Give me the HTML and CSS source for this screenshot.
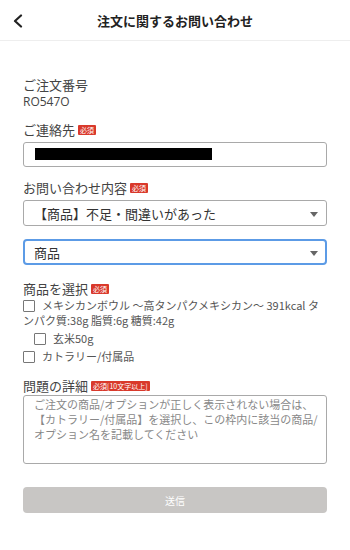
FILE: index.html
```html
<!DOCTYPE html>
<html lang="ja">
<head>
<meta charset="utf-8">
<link rel="stylesheet" href="styles.css">
</head>
<body>
<header class="header">
  <span class="back"><svg width="12" height="14" viewBox="0 0 12 14"><path d="M9 1.5 L3 7 L9 12.5" fill="none" stroke="#222" stroke-width="2.2" stroke-linecap="round" stroke-linejoin="round"/></svg></span>
  <h1 class="title">注文に関するお問い合わせ</h1>
</header>
<main class="content">
  <div class="label first">ご注文番号</div>
  <div class="value">RO547O</div>

  <div class="label gap">ご連絡先 <span class="badge">必須</span></div>
  <div class="input"><span class="redact"></span></div>

  <div class="label gap">お問い合わせ内容 <span class="badge">必須</span></div>
  <div class="select"><span>【商品】不足・間違いがあった</span><span class="arrow"></span></div>
  <div class="select focus"><span>商品</span><span class="arrow"></span></div>

  <div class="label gap2">商品を選択 <span class="badge">必須</span></div>
  <div class="checks">
    <div class="check"><span class="box"></span>メキシカンボウル ～高タンパクメキシカン～ 391kcal タンパク質:38g 脂質:6g 糖質:42g</div>
    <div class="check sub"><span class="box"></span>玄米50g</div>
    <div class="check"><span class="box"></span>カトラリー/付属品</div>
  </div>

  <div class="label gap3">問題の詳細 <span class="badge">必須[10文字以上]</span></div>
  <div class="textarea">ご注文の商品/オプションが正しく表示されない場合は、【カトラリー/付属品】を選択し、この枠内に該当の商品/オプション名を記載してください</div>

  <div class="button">送信</div>
</main>
</body>
</html>
```

FILE: styles.css
```css
* { box-sizing: border-box; }
body {
  margin: 0;
  background: #fff;
  font-family: "Noto Sans CJK JP", "Noto Sans", sans-serif;
  color: #444;
}
.header {
  height: 41px;
  border-bottom: 1px solid #eeeeee;
  display: flex;
  align-items: center;
  justify-content: center;
  position: relative;
}
.back {
  position: absolute;
  left: 12px;
  top: 14px;
  display: flex;
}
.title {
  margin: 0;
  font-size: 13px;
  font-weight: 700;
  color: #222;
  line-height: 16px;
  margin-top: 1px;
}
.content {
  padding: 0 23px;
}
.label {
  font-size: 13px;
  line-height: 16px;
  color: #444;
  display: flex;
  align-items: center;
  gap: 3px;
}
.label.first { margin-top: 36px; }
.label.gap { margin-top: 13px; margin-bottom: 4px; }
.label.gap2 { margin-top: 16px; margin-bottom: 1px; }
.label.gap3 { margin-top: 14px; margin-bottom: 1px; }
.value {
  font-size: 12px;
  line-height: 15px;
  margin-top: 1px;
  color: #444;
  font-family: "Open Sans", "Noto Sans CJK JP", sans-serif;
}
.badge {
  background: #d9392b;
  color: #fff;
  font-size: 7px;
  line-height: 10px;
  padding: 0 2px;
  border-radius: 1px;
}
.input {
  height: 25px;
  border: 1px solid #a9a9a9;
  border-radius: 3px;
  padding: 5px 11px;
}
.redact {
  display: block;
  width: 177px;
  height: 12px;
  background: #000;
}
.select {
  height: 26px;
  border: 1px solid #a9a9a9;
  border-radius: 3px;
  display: flex;
  align-items: center;
  justify-content: space-between;
  padding: 0 8px 0 10px;
  font-size: 13px;
  color: #333;
}
.select + .select { margin-top: 13px; }
.select.focus {
  border: 2px solid #5c9be6;
  border-radius: 4px;
  padding: 0 7px 0 9px;
}
.arrow {
  width: 0;
  height: 0;
  border-left: 4px solid transparent;
  border-right: 4px solid transparent;
  border-top: 5px solid #666;
  margin-top: 2px;
}
.checks {
  font-size: 11px;
  line-height: 15px;
  color: #555;
}
.check {
  margin-bottom: 3px;
}
.check.sub { padding-left: 11px; margin-top: 1px; }
.box {
  display: inline-block;
  width: 12px;
  height: 12px;
  border: 1px solid #777;
  border-radius: 1px;
  vertical-align: -2px;
  margin-right: 7px;
}
.textarea {
  height: 69px;
  border: 1px solid #a9a9a9;
  border-radius: 3px;
  padding: 1px 4px 0 10px;
  font-size: 11px;
  line-height: 15px;
  color: #888;
}
.button {
  margin-top: 23px;
  height: 26px;
  background: #c8c6c4;
  border-radius: 4px;
  color: #fff;
  font-size: 10px;
  display: flex;
  align-items: center;
  justify-content: center;
}
```
